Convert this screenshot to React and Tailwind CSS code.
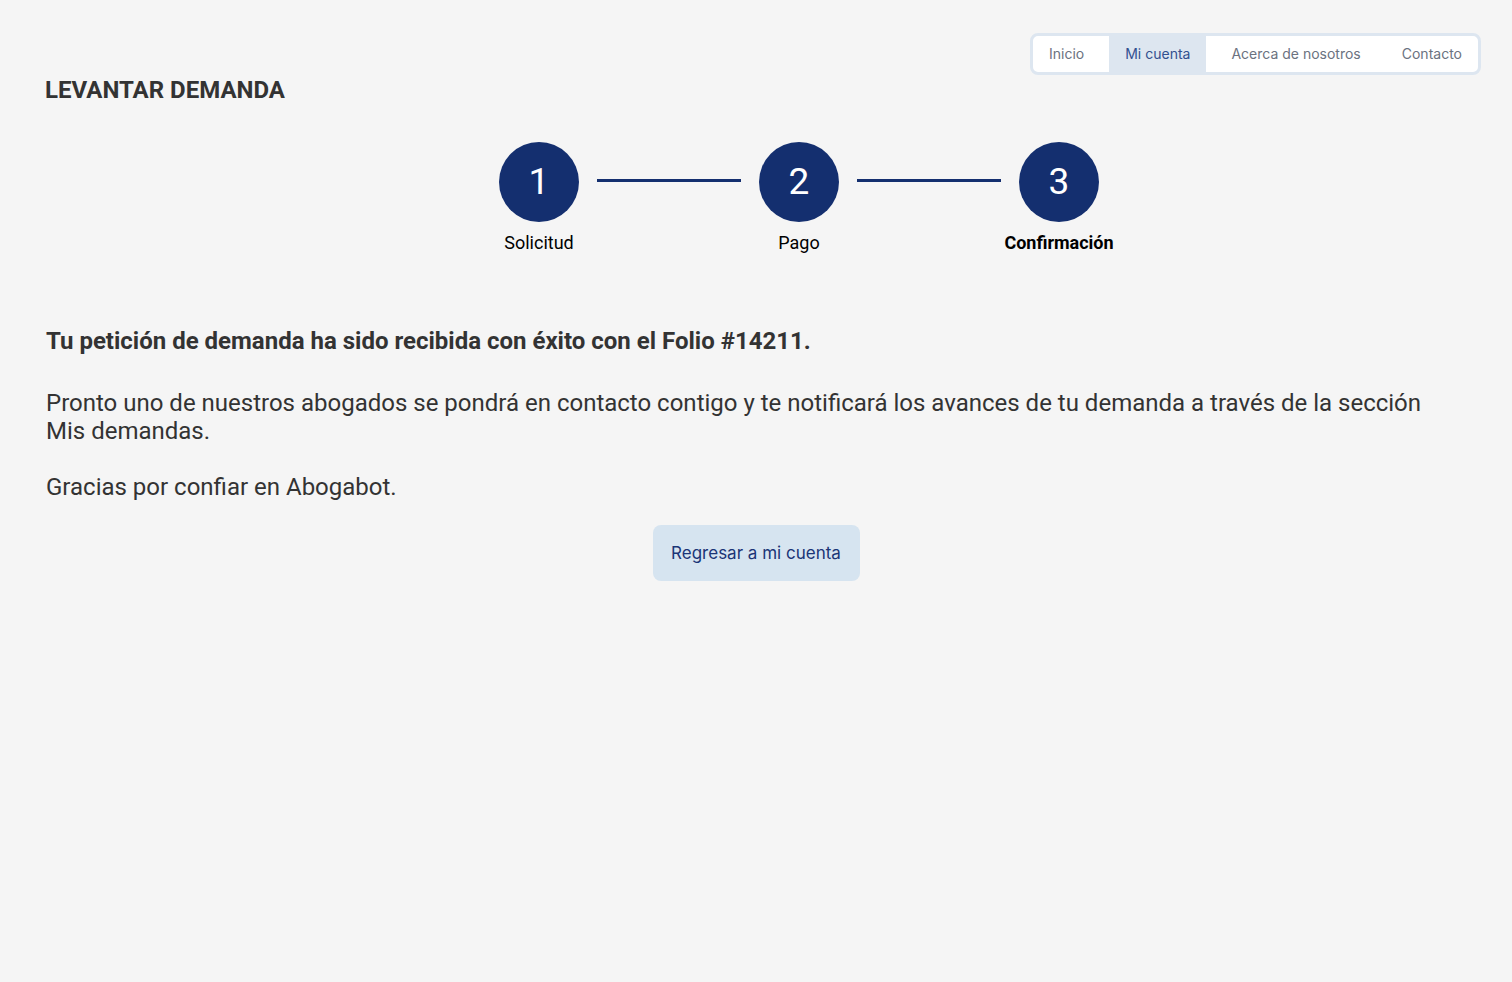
const steps = [
  { n: 1, label: 'Solicitud' },
  { n: 2, label: 'Pago' },
  { n: 3, label: 'Confirmación', current: true },
]

const tabs = ['Inicio', 'Mi cuenta', 'Acerca de nosotros', 'Contacto']

function Nav() {
  return (
    <div className="flex justify-end pr-[31px] pt-[33px]">
      <nav className="flex gap-[9px] rounded-lg border-[3px] border-[#dde6f0] bg-white font-['Inter',sans-serif] text-sm">
        {tabs.map((t) => (
          <a
            key={t}
            href="#"
            className={
              t === 'Mi cuenta'
                ? 'flex h-9 items-center bg-[#dde6f0] px-4 text-[#32508f]'
                : 'flex h-9 items-center px-4 text-[#6b7280]'
            }
          >
            {t}
          </a>
        ))}
      </nav>
    </div>
  )
}

function Stepper() {
  return (
    <div className="mt-[36px] flex items-start pl-[499px]">
      {steps.map((s, i) => (
        <div key={s.n} className="flex items-start">
          <div className="flex w-20 flex-col items-center">
            <div className="flex h-20 w-20 items-center justify-center rounded-full bg-[#142f6f] text-[37px] text-white">
              {s.n}
            </div>
            <span
              className={
                s.current
                  ? 'mt-[9px] whitespace-nowrap text-lg leading-6 font-bold text-black'
                  : 'mt-[9px] whitespace-nowrap text-lg leading-6 text-black'
              }
            >
              {s.label}
            </span>
          </div>
          {i < steps.length - 1 && (
            <div className="mx-[18px] mt-[37px] h-[3px] w-[144px] bg-[#142f6f]" />
          )}
        </div>
      ))}
    </div>
  )
}

export default function App() {
  return (
    <div className="min-h-screen bg-[#f5f5f5] font-['Roboto',sans-serif] text-[#333333]">
      <Nav />
      <h1 className="-mt-px pl-[45px] text-2xl leading-8 font-bold">LEVANTAR DEMANDA</h1>
      <Stepper />

      <div className="px-[46px]">
        <p className="mt-[72px] text-2xl leading-7 font-bold">
          Tu petición de demanda ha sido recibida con éxito con el Folio #14211.
        </p>
        <p className="mt-[34px] text-2xl leading-7">
          Pronto uno de nuestros abogados se pondrá en contacto contigo y te notificará los avances
          de tu demanda a través de la sección Mis demandas.
        </p>
        <p className="mt-7 text-2xl leading-7">Gracias por confiar en Abogabot.</p>
      </div>

      <div className="mt-6 flex justify-center">
        <button
          type="button"
          className="h-14 w-[207px] rounded-lg bg-[#d6e4f0] pt-0.5 font-['Inter',sans-serif] text-[17px] text-[#1b3577]"
        >
          Regresar a mi cuenta
        </button>
      </div>
    </div>
  )
}
